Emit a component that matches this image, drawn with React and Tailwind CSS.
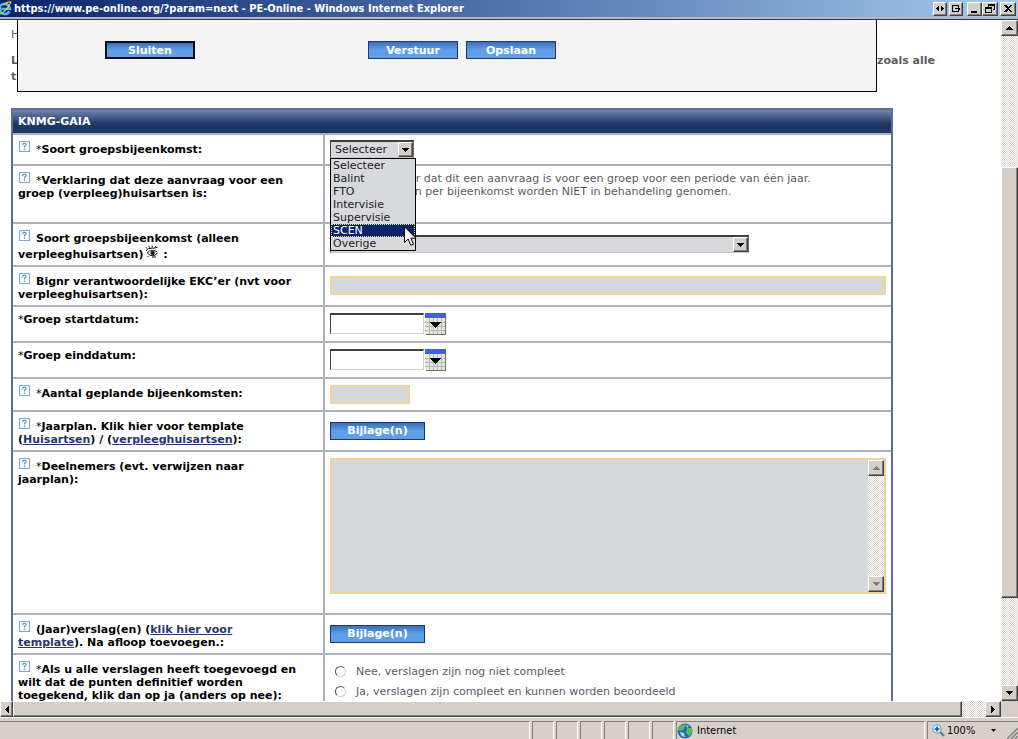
import React from 'react'
import clsx from 'clsx'

const raised = 'border border-t-white border-l-white border-r-[#404040] border-b-[#404040] bg-[#d4d0c8] shadow-[inset_-1px_-1px_0_#808080]'
const track = 'bg-[repeating-conic-gradient(#ffffff_0_25%,#d9d6cf_0_50%)] bg-[length:2px_2px]'

const arrows = {
  up: 'M0 4h7L3.5 0z',
  down: 'M0 0h7L3.5 4z',
  left: 'M4 0v7L0 3.5z',
  right: 'M0 0v7L4 3.5z'
}

const Arrow = ({ dir, className = 'fill-black' }) => {
  const flat = dir === 'up' || dir === 'down'
  return (
    <svg
      width={flat ? 7 : 4}
      height={flat ? 4 : 7}
      viewBox={flat ? '0 0 7 4' : '0 0 4 7'}
      shapeRendering="crispEdges"
      className={className}
    >
      <path d={arrows[dir]} />
    </svg>
  )
}

const ScrollButton = ({ dir, label, className, arrowClass }) => (
  <button type="button" aria-label={label} className={clsx(raised, 'flex shrink-0 items-center justify-center', className)}>
    <Arrow dir={dir} className={arrowClass} />
  </button>
)

const HelpIcon = () => (
  <svg width="12" height="11" viewBox="0 0 12 11" className="mr-1.5 inline-block align-[1px]">
    <rect x="1.5" y="0.5" width="10" height="10" fill="#f4fbff" stroke="#7fa9cc" />
    <path d="M4.8 4V3.2Q4.8 2.3 6.5 2.3T8.2 3.6Q8.2 4.6 6.5 5.2V6.6M6.5 7.6V8.8" fill="none" stroke="#4d8fc4" strokeWidth="1.1" />
  </svg>
)

const EyeIcon = () => (
  <svg width="14" height="13" viewBox="0 0 14 13" className="ml-0.5 inline-block align-[0px]" fill="none" stroke="#111">
    <path d="M1 5.5Q3 2.8 7 3.2Q10 3.4 12.6 2.2M2 3.6L.8 2.2M4.5 2.8L3.6.8M7.2 2.6V.6M10 2.6L11 .8" />
    <path d="M2 8Q4 5.4 7.5 5.5Q10.5 5.6 12.5 7.2M2.5 8.2Q5 11 8 10.8Q11 10.6 12.2 8M3.5 11l-1 1M7 12h4" />
    <circle cx="7.6" cy="8" r="1.7" fill="#111" />
  </svg>
)

const CalendarIcon = () => (
  <svg width="21" height="22" viewBox="0 0 21 22" shapeRendering="crispEdges">
    <rect x="1" y="1" width="20" height="21" fill="#6f6f6a" />
    <rect width="20" height="21" fill="#e6e6dc" />
    <path d="M0 9.5h20M0 13.5h20M0 17.5h20M4.5 5v16M8.5 5v16M12.5 5v16M16.5 5v16" stroke="#b4b8b0" />
    <rect width="21" height="5" fill="#3e60d8" />
    <path d="M4 9h12l-6 6z" fill="#000" />
  </svg>
)

const Cursor = () => (
  <svg width="13" height="21" viewBox="0 0 13 21" className="absolute top-[67px] left-[73px]">
    <path d="M.5.8V16.500l3.700-3.500 2.600 6.300 2.600-1.100-2.600-6h5.100z" fill="#fff" stroke="#000" />
  </svg>
)

const BlueButton = ({ className, children }) => (
  <button
    type="button"
    className={clsx(
      'flex h-[18px] items-center justify-center bg-linear-to-b from-[#3a70b8] to-[#609fe8] to-50% font-bold text-white',
      className
    )}
  >
    {children}
  </button>
)

const Select = ({ id, value, className }) => (
  <div className={clsx('relative', className)}>
    <select
      id={id}
      className="block h-[18px] w-full appearance-none border border-t-2 border-[#c8c8c8] border-t-[#404040] border-l-[#404040] border-r-[#707070] bg-[#d8d9dd] pl-1 text-[#222]"
    >
      <option>{value}</option>
    </select>
    <span className={clsx(raised, 'pointer-events-none absolute top-0.5 right-px flex h-[15px] w-[15px] items-center justify-center')}>
      <Arrow dir="down" />
    </span>
  </div>
)

const Row = ({ height, help = true, label, htmlFor, top, children }) => (
  <div className={clsx('grid grid-cols-[312px_1fr] border-b-2 border-[#adb1bb]', height)}>
    <div className="border-r-2 border-[#adb1bb] pt-1.5 pr-6 pl-[5px] font-bold text-black">
      {help && <HelpIcon />}
      <label htmlFor={htmlFor}>{label}</label>
    </div>
    <div className={clsx('flex px-[5px]', top ? 'items-start pt-1.5' : 'items-center pb-px')}>{children}</div>
  </div>
)

const Star = () => <span className="font-normal">*</span>

const DocLink = ({ children }) => (
  <a href="#" className="text-[#27366b] underline">{children}</a>
)

const DateField = ({ id }) => (
  <div className="flex items-center">
    <input id={id} type="text" className="h-[21px] w-[94px] border border-t-2 border-[#d4d0c8] border-t-[#404040] border-l-[#404040] bg-white px-1" />
    <button type="button" aria-label="Kalender" className="ml-px"><CalendarIcon /></button>
  </div>
)

const Radio = ({ label }) => (
  <label className="flex h-5 items-center">
    <input
      type="radio"
      name="compleet"
      className="mr-2.5 ml-[5px] h-[11px] w-[11px] appearance-none rounded-full border border-[#d4d0c8] border-t-[#505050] border-l-[#505050] bg-white"
    />
    {label}
  </label>
)

const meetingTypes = ['Selecteer', 'Balint', 'FTO', 'Intervisie', 'Supervisie', 'SCEN', 'Overige']

const MeetingTypeList = () => (
  <div className="absolute top-[18px] left-0 z-20 w-[86px] border border-black bg-[#d8d9dd] text-[#222]">
    <ul role="listbox">
      {meetingTypes.map((type) => (
        <li
          key={type}
          role="option"
          aria-selected={type === 'SCEN'}
          className={clsx('h-[13px] pl-0.5 leading-[13px]', type === 'SCEN' && 'bg-[#0a246a] text-white outline-1 -outline-offset-1 outline-dotted outline-[#f0e0a0]')}
        >
          {type}
        </li>
      ))}
    </ul>
    <Cursor />
  </div>
)

const windowButtons = [
  { label: 'Schuiven', className: 'w-[14px]', icon: <path d="M5 3v5L2 5.500zM7 3v5l3-2.500z" /> },
  { label: 'Loskoppelen', className: 'ml-0.5 w-[14px]', icon: <path d="M2 2h7v2H8V3H3v5h5V7h1v2H2zM5 5h3V4l3 2-3 2V6H5z" /> },
  { label: 'Minimaliseren', className: 'ml-1 w-[15px]', icon: <path d="M2 8h6v2H2z" /> },
  { label: 'Herstellen', className: 'w-[16px]', icon: <path fillRule="evenodd" d="M4 1h7v6H9V6h1V3H5v1H4zM1 4h7v6H1zM2 6v3h5V6z" /> },
  { label: 'Sluiten', className: 'ml-0.5 w-[16px]', icon: <path d="M2 2h2l2 2 2-2h2L7 5.500 10 9H8L6 7 4 9H2l3-3.500z" /> }
]

const TitleBar = () => (
  <header className="flex h-5 shrink-0 items-start border-b border-[#303848] bg-[#b4b8c4]">
    <div className="flex h-[17px] w-full items-center bg-linear-to-r from-[#0a246a] to-[#a6caf0] pr-0.5">
      <svg width="12" height="16" viewBox="0 0 12 16">
        <path d="M9.500 10.500Q7.500 13.500 4 13T0 9V5Q2 2.500 5.500 3T10 8H1.500" fill="none" stroke="#58b4f0" strokeWidth="2.400" />
        <path d="M0 13Q6 11 11 1Q8 0 3 4" fill="none" stroke="#f0c848" strokeWidth="1.200" />
      </svg>
      <h1 className="ml-0.5 flex-1 font-['DejaVu_Sans_Condensed','DejaVu_Sans',sans-serif] text-[11px] font-bold text-white">
        https://www.pe-online.org/?param=next - PE-Online - Windows Internet Explorer
      </h1>
      {windowButtons.map((b) => (
        <button key={b.label} type="button" aria-label={b.label} className={clsx(raised, 'flex h-[14px] items-center justify-center', b.className)}>
          <svg width="12" height="12" viewBox="0 0 12 12" shapeRendering="crispEdges">{b.icon}</svg>
        </button>
      ))}
    </div>
  </header>
)

const StatusBar = () => (
  <footer className="flex h-[22px] shrink-0 gap-0.5 border-t border-white bg-[#d6d0c8] pt-[3px] font-['DejaVu_Sans_Condensed','DejaVu_Sans',sans-serif] text-[11px] text-black">
    <div className="flex-1 border-t border-r border-t-[#808080] border-r-white" />
    {[1, 2, 3, 4, 5, 6].map((n) => (
      <div key={n} className="w-[22px] border border-b-0 border-[#808080] border-r-white" />
    ))}
    <div className="flex w-[249px] items-center border border-b-0 border-[#808080] border-r-white">
      <svg width="16" height="16" viewBox="0 0 16 16" className="mr-1">
        <circle cx="8" cy="8" r="7.500" fill="#2468b0" />
        <path d="M3 3Q7 0 9 2L7 6 4 8 1 7Q1 5 3 3M10 5l5 0Q16 10 12 13L9 10z" fill="#5cba58" />
        <path d="M3 9l4 1 1 4Q4 14 3 9M9 2l3 1-2 2z" fill="#a8dcf4" />
      </svg>
      Internet
    </div>
    <div className="relative flex w-[91px] items-center border border-r-0 border-b-0 border-[#808080] pl-1">
      <svg width="13" height="13" viewBox="0 0 13 13" className="mr-0.5">
        <path d="M8 8l4 4" stroke="#70777f" strokeWidth="2.400" />
        <circle cx="5" cy="5" r="4.200" fill="#e4f4ff" stroke="#58a0d8" />
        <path d="M5 2.500v5M2.500 5h5" stroke="#1850a0" strokeWidth="1.600" />
      </svg>
      <span className="flex-1">100%</span>
      <svg width="5" height="3" viewBox="0 0 5 3" className="mr-[22px]">
        <path d="M0 0h5L2.500 3z" />
      </svg>
      <svg width="11" height="11" viewBox="0 0 11 11" className="absolute right-0 bottom-0" stroke="#808080" strokeWidth="1.500">
        <path d="M0 11L11 0M4 11l7-7M8 11l3-3" />
      </svg>
    </div>
  </footer>
)

const ActionPanel = () => (
  <div className="absolute top-0 right-[124px] left-[17px] z-10 flex h-[72px] border border-t-0 border-black bg-[#f4f4f4] pt-[21px] pl-[87px]">
    <BlueButton className="w-[90px] border-2 border-[#060c1c]">Sluiten</BlueButton>
    <BlueButton className="ml-[173px] w-[90px] border border-[#1c3a70]">Verstuur</BlueButton>
    <BlueButton className="ml-2 w-[90px] border border-[#1c3a70]">Opslaan</BlueButton>
  </div>
)

const GaiaForm = () => (
  <form className="mt-[23px] mr-[108px] border-2 border-[#5f6f93]">
    <h2 className="flex h-[25px] items-center border-b-2 border-[#adb1bb] bg-linear-to-b from-[#7585a8] via-[#1f3868] via-60% to-[#1c3463] pl-[5px] font-bold text-white">
      KNMG-GAIA
    </h2>
    <Row height="h-[31px]" htmlFor="soort" label={<><Star />Soort groepsbijeenkomst:</>}>
      <div className="relative">
        <Select id="soort" value="Selecteer" className="w-[84px]" />
        <MeetingTypeList />
      </div>
    </Row>
    <Row height="h-[58px]" top label={<><Star />Verklaring dat deze aanvraag voor een groep (verpleeg)huisartsen is:</>}>
      <p className="pl-8">
        Ik verklaar dat dit een aanvraag is voor een groep voor een periode van één jaar.
        <br />
        Aanvragen per bijeenkomst worden NIET in behandeling genomen.
      </p>
    </Row>
    <Row height="h-[43px]" htmlFor="soortVerpleeg" label={<>Soort groepsbijeenkomst (alleen verpleeghuisartsen)<EyeIcon /> :</>}>
      <Select id="soortVerpleeg" value="" className="w-[419px]" />
    </Row>
    <Row height="h-[40px]" htmlFor="bignr" label="Bignr verantwoordelijke EKC’er (nvt voor verpleeghuisartsen):">
      <input id="bignr" type="text" className="h-[19px] w-full border-2 border-[#ecd596] bg-[#d6d8dc] px-1" />
    </Row>
    <Row height="h-[36px]" help={false} htmlFor="start" label={<><Star />Groep startdatum:</>}>
      <DateField id="start" />
    </Row>
    <Row height="h-[36px]" help={false} htmlFor="eind" label={<><Star />Groep einddatum:</>}>
      <DateField id="eind" />
    </Row>
    <Row height="h-[33px]" htmlFor="aantal" label={<><Star />Aantal geplande bijeenkomsten:</>}>
      <input id="aantal" type="text" className="h-[19px] w-[80px] border-2 border-[#ecd596] bg-[#d6d8dc] px-1" />
    </Row>
    <Row
      height="h-[40px]"
      label={<><Star />Jaarplan. Klik hier voor template (<DocLink>Huisartsen</DocLink>) / (<DocLink>verpleeghuisartsen</DocLink>):</>}
    >
      <BlueButton className="w-[95px] border border-[#1c3a70]">Bijlage(n)</BlueButton>
    </Row>
    <Row height="h-[163px]" top htmlFor="deelnemers" label={<><Star />Deelnemers (evt. verwijzen naar jaarplan):</>}>
      <div className="flex h-[136px] w-full border-2 border-[#ecd596] bg-[#d6d9dc]">
        <textarea id="deelnemers" className="flex-1 resize-none px-1" />
        <div className={clsx(track, 'flex w-4 flex-col justify-between')}>
          <ScrollButton dir="up" label="Omhoog" className="h-4" arrowClass="fill-[#808080]" />
          <ScrollButton dir="down" label="Omlaag" className="h-4" arrowClass="fill-[#808080]" />
        </div>
      </div>
    </Row>
    <Row height="h-[40px]" label={<>(Jaar)verslag(en) (<DocLink>klik hier voor template</DocLink>). Na afloop toevoegen.:</>}>
      <BlueButton className="w-[95px] border border-[#1c3a70]">Bijlage(n)</BlueButton>
    </Row>
    <Row
      height="h-[62px]"
      top
      label={<><Star />Als u alle verslagen heeft toegevoegd en wilt dat de punten definitief worden toegekend, klik dan op ja (anders op nee):</>}
    >
      <div>
        <Radio label="Nee, verslagen zijn nog niet compleet" />
        <Radio label="Ja, verslagen zijn compleet en kunnen worden beoordeeld" />
      </div>
    </Row>
  </form>
)

const App = () => (
  <div className="flex h-screen flex-col overflow-hidden bg-white font-['DejaVu_Sans',sans-serif] text-[11px] leading-[13px] text-[#5c5a60]">
    <TitleBar />
    <div className="flex min-h-0 flex-1">
      <main className="relative min-w-0 flex-1 overflow-hidden pl-[11px]">
        <ActionPanel />
        <p className="pt-2 leading-[13px]">H</p>
        <p className="mt-3 flex font-bold leading-4">
          <span className="flex-1">L<br />t</span>
          <span className="w-[124px]">zoals alle</span>
        </p>
        <GaiaForm />
      </main>
      <div className={clsx(track, 'flex w-[17px] flex-col')}>
        <ScrollButton dir="up" label="Pagina omhoog" className="h-4" />
        <div className="flex-[131]" />
        <div className={clsx(raised, 'flex-[431]')} />
        <div className="flex-[87]" />
        <ScrollButton dir="down" label="Pagina omlaag" className="h-4" />
      </div>
    </div>
    <div className="flex h-4 shrink-0 bg-[#d4d0c8]">
      <ScrollButton dir="left" label="Pagina naar links" className="w-[13px]" />
      <div className={clsx(track, 'flex flex-1')}>
        <div className={clsx(raised, 'flex-[949]')} />
        <div className="flex-[23]" />
      </div>
      <ScrollButton dir="right" label="Pagina naar rechts" className="w-4" />
      <div className="w-[17px]" />
    </div>
    <StatusBar />
  </div>
)

export default App
